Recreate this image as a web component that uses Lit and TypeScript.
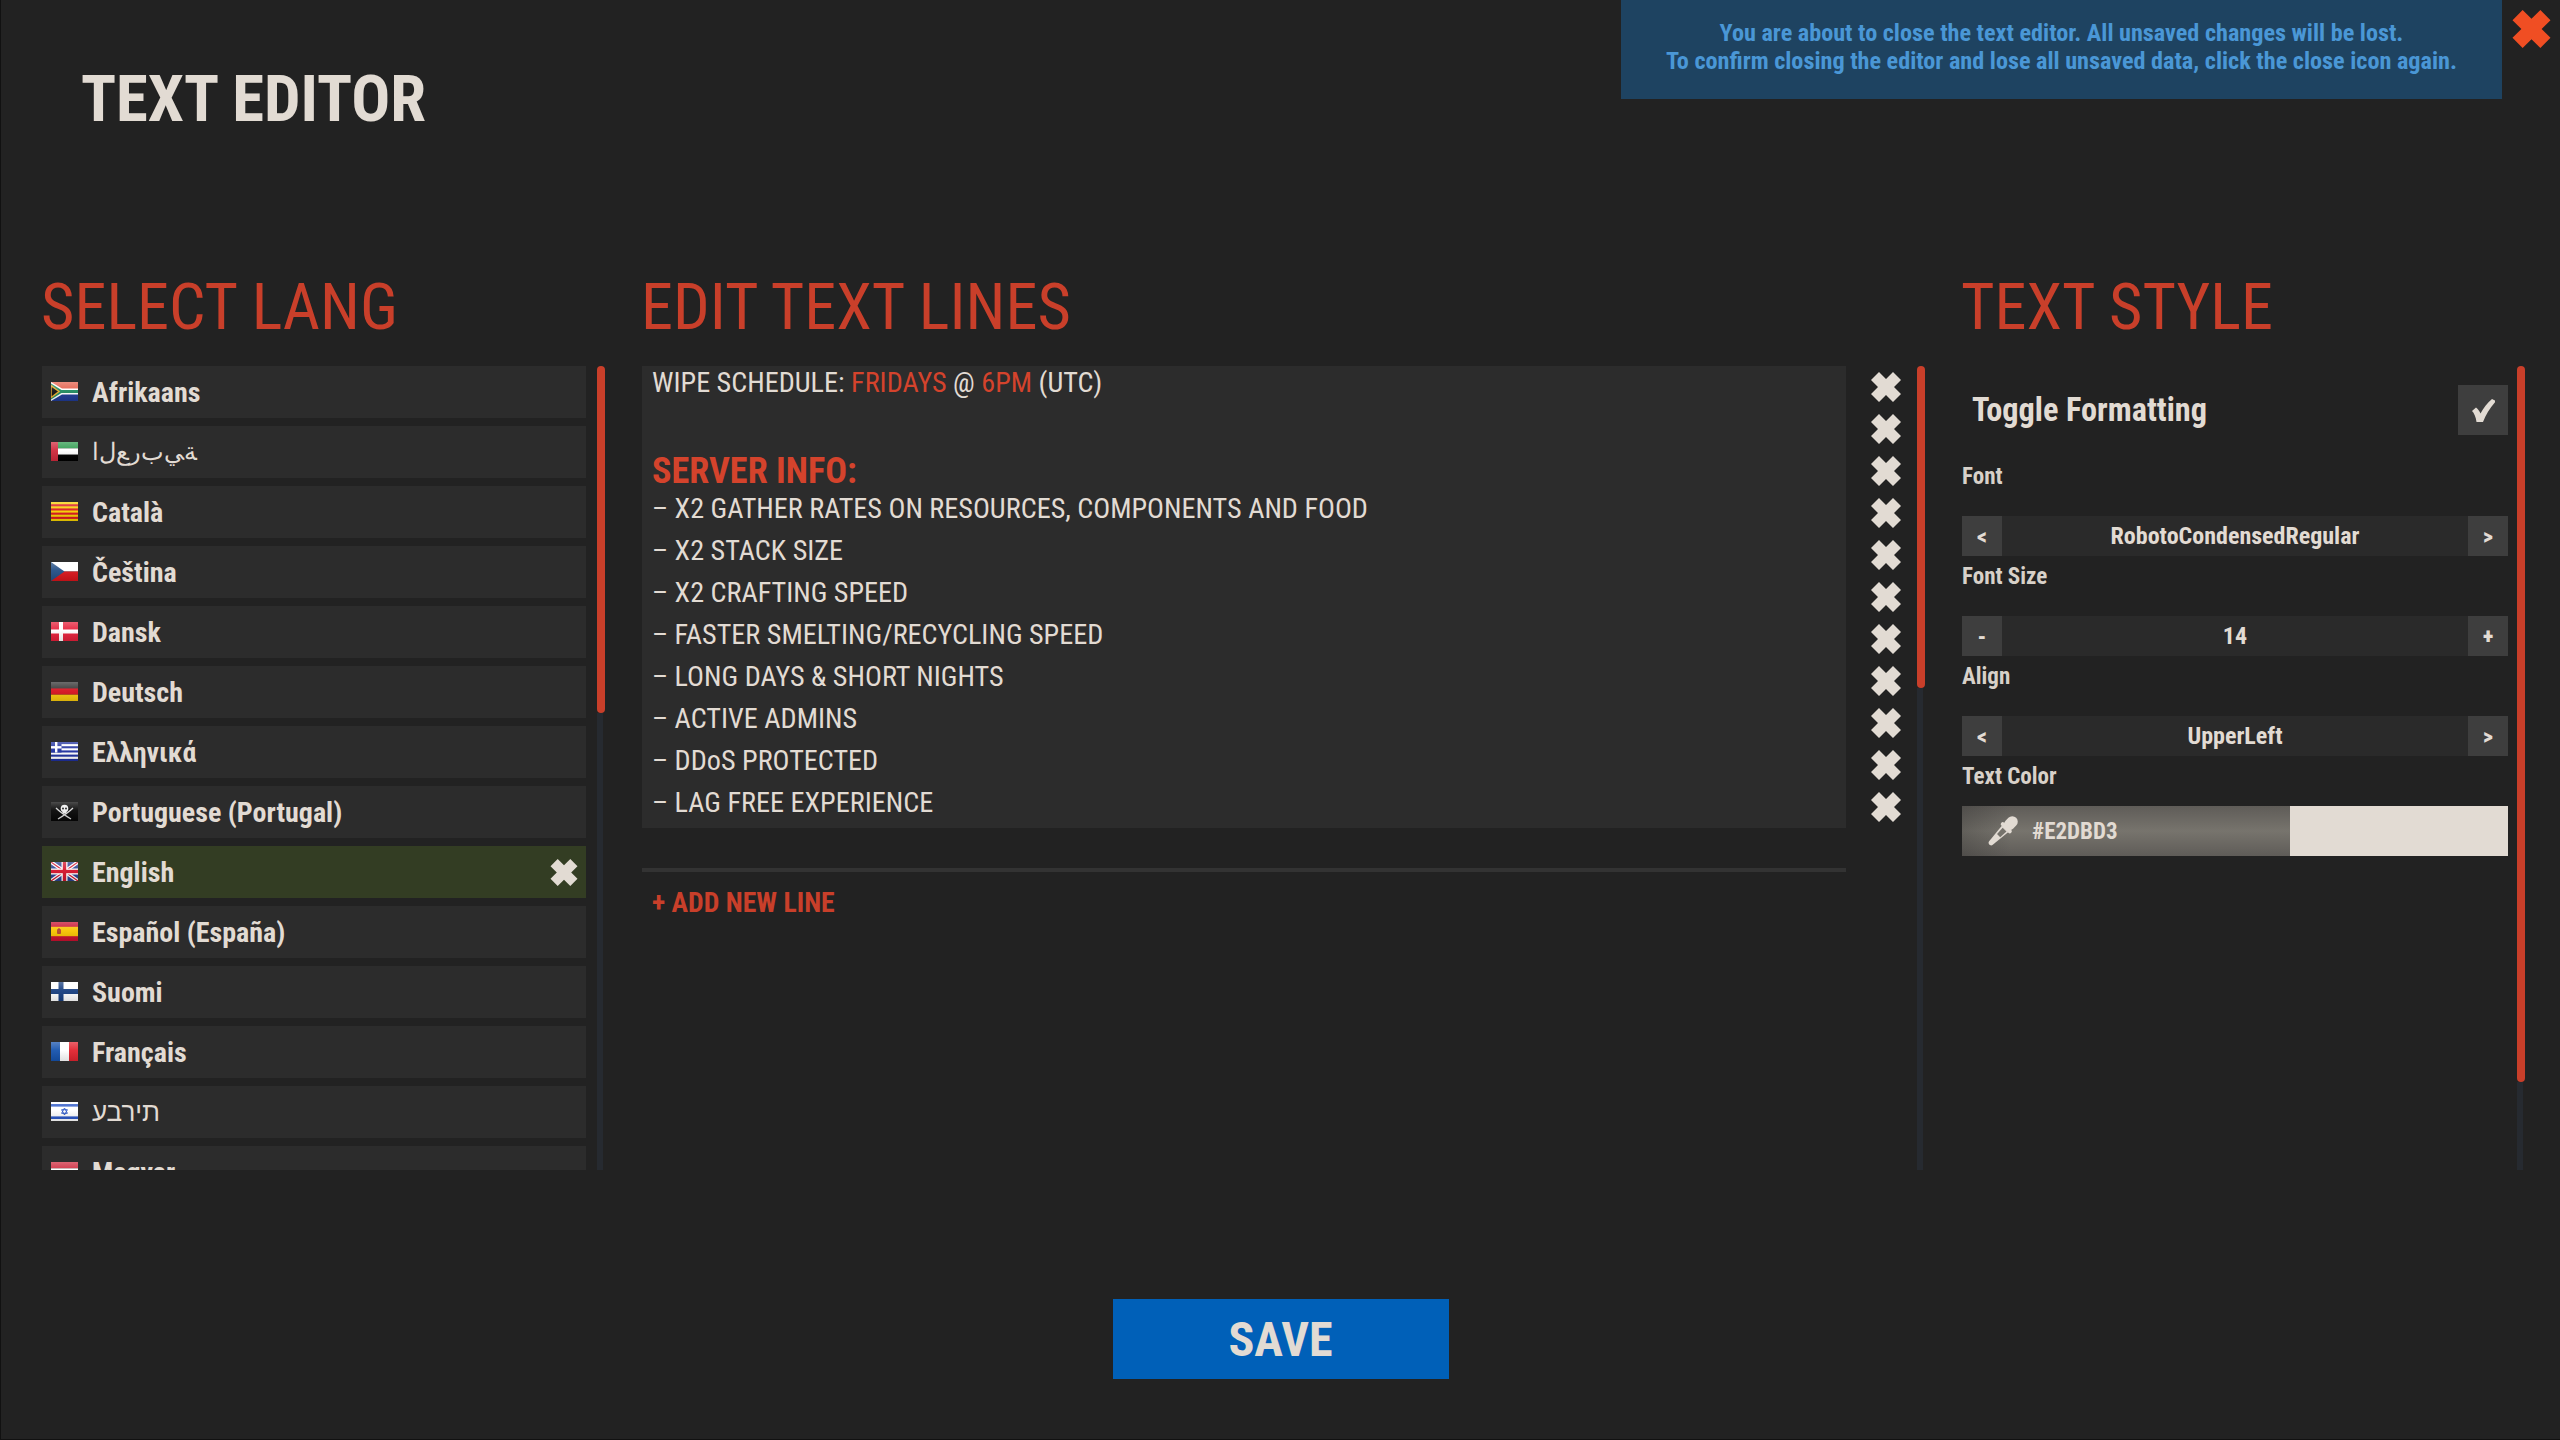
import { LitElement, html, css, svg } from "lit";
import { customElement } from "lit/decorators.js";

const X = "8,0 15,7 22,0 30,8 23,15 30,22 22,30 15,23 8,30 0,22 7,15 0,8";
const xIcon = (cls: string) => html`<svg class=${cls} viewBox="0 0 30 30"><polygon points=${X} /></svg>`;

const flags: Record<string, unknown> = {
  za: svg`<rect width="27" height="19" fill="#e4604c"/><rect y="9.5" width="27" height="9.5" fill="#1f3a93"/><path d="M0 0L11 6.5H27V12.5H11L0 19Z" fill="#fff"/><path d="M0 1.5L10.5 8H27V11H10.5L0 17.5Z" fill="#1f8a5f"/><path d="M0 3.5L8 9.5L0 15.5Z" fill="#111" stroke="#e8a92c" stroke-width="1.4"/>`,
  ae: svg`<rect width="27" height="6.4" fill="#2e9b4e"/><rect y="6.4" width="27" height="6.3" fill="#fff"/><rect y="12.7" width="27" height="6.3" fill="#000"/><rect width="7" height="19" fill="#cf2a3c"/>`,
  ca: svg`<rect width="27" height="19" fill="#f5d000"/><g fill="#d8141e"><rect y="2.2" width="27" height="2.1"/><rect y="6.4" width="27" height="2.1"/><rect y="10.6" width="27" height="2.1"/><rect y="14.8" width="27" height="2.1"/></g>`,
  cz: svg`<rect width="27" height="9.5" fill="#fff"/><rect y="9.5" width="27" height="9.5" fill="#d7141a"/><path d="M0 0L13.5 9.5L0 19Z" fill="#234f86"/>`,
  dk: svg`<rect width="27" height="19" fill="#e4203a"/><rect x="8" width="4" height="19" fill="#fff"/><rect y="7.5" width="27" height="4" fill="#fff"/>`,
  de: svg`<rect width="27" height="6.4" fill="#333"/><rect y="6.4" width="27" height="6.3" fill="#d6121f"/><rect y="12.7" width="27" height="6.3" fill="#f6c80b"/>`,
  gr: svg`<rect width="27" height="19" fill="#fff"/><g fill="#1e2f9e"><rect width="27" height="2.1"/><rect y="4.2" width="27" height="2.1"/><rect y="8.4" width="27" height="2.1"/><rect y="12.6" width="27" height="2.1"/><rect y="16.9" width="27" height="2.1"/><rect width="10.5" height="10.5"/></g><rect x="4" width="2.4" height="10.5" fill="#fff"/><rect y="4.1" width="10.5" height="2.4" fill="#fff"/>`,
  pt: svg`<rect width="27" height="19" fill="#060606"/><path d="M5 6C9 10 15 14 20 17M22 6C18 10 12 14 7 17" fill="none" stroke="#d8d8d8" stroke-width="1.3"/><circle cx="13.5" cy="6.5" r="3.8" fill="#eee"/><rect x="11.5" y="9" width="4" height="2.6" fill="#eee"/><circle cx="12" cy="6.5" r=".9" fill="#000"/><circle cx="15" cy="6.5" r=".9" fill="#000"/>`,
  gb: svg`<rect width="27" height="19" fill="#29408f"/><path d="M0 0L27 19M27 0L0 19" stroke="#fff" stroke-width="3.6"/><path d="M0 0L27 19M27 0L0 19" stroke="#d3122a" stroke-width="1.2"/><rect x="10.5" width="6" height="19" fill="#fff"/><rect y="6.5" width="27" height="6" fill="#fff"/><rect x="11.8" width="3.4" height="19" fill="#d3122a"/><rect y="7.8" width="27" height="3.4" fill="#d3122a"/>`,
  es: svg`<rect width="27" height="19" fill="#c8102e"/><rect y="4.8" width="27" height="9.4" fill="#f8c400"/><rect x="6" y="7" width="4" height="5" rx="1" fill="#b5482a"/><rect x="7" y="6.4" width="2" height="1.4" fill="#a33"/>`,
  fi: svg`<rect width="27" height="19" fill="#fff"/><rect x="7.5" width="5" height="19" fill="#183f80"/><rect y="7" width="27" height="5" fill="#183f80"/>`,
  fr: svg`<rect width="9" height="19" fill="#1653ad"/><rect x="9" width="9" height="19" fill="#fff"/><rect x="18" width="9" height="19" fill="#e1242f"/>`,
  il: svg`<rect width="27" height="19" fill="#fff"/><rect y="2" width="27" height="2.6" fill="#2a56c6"/><rect y="14.4" width="27" height="2.6" fill="#2a56c6"/><path d="M13.5 6L16.4 11.3H10.6ZM13.5 13L10.6 7.7H16.4Z" fill="none" stroke="#2a56c6" stroke-width="1"/>`,
  hu: svg`<rect width="27" height="6.4" fill="#cd2a3e"/><rect y="6.4" width="27" height="6.3" fill="#fff"/><rect y="12.7" width="27" height="6.3" fill="#43805a"/>`,
};

const langs = [
  { c: "za", n: "Afrikaans" },
  { c: "ae", n: "\uFE94\uFEF2\uFE8F\uFEAD\uFECA\uFEDD\uFE8D", raw: "ar" },
  { c: "ca", n: "Català" },
  { c: "cz", n: "Čeština" },
  { c: "dk", n: "Dansk" },
  { c: "de", n: "Deutsch" },
  { c: "gr", n: "Ελληνικά" },
  { c: "pt", n: "Portuguese (Portugal)" },
  { c: "gb", n: "English", active: true },
  { c: "es", n: "Español (España)" },
  { c: "fi", n: "Suomi" },
  { c: "fr", n: "Français" },
  { c: "il", n: "עברית", raw: "he" },
  { c: "hu", n: "Magyar" },
];

const lines = [
  "– X2 GATHER RATES ON RESOURCES, COMPONENTS AND FOOD",
  "– X2 STACK SIZE",
  "– X2 CRAFTING SPEED",
  "– FASTER SMELTING/RECYCLING SPEED",
  "– LONG DAYS & SHORT NIGHTS",
  "– ACTIVE ADMINS",
  "– DDoS PROTECTED",
  "– LAG FREE EXPERIENCE",
];

@customElement("app-root")
export class AppRoot extends LitElement {
  static styles = css`
    :host {
      display: block;
      width: 2560px;
      height: 1440px;
      background: #222222;
      color: #e2dbd3;
      font-family: "Roboto Condensed", "Liberation Sans Narrow", Roboto, sans-serif;
      font-stretch: 75%;
      overflow: hidden;
    }
    .page { height: 1440px; display: flex; flex-direction: column; box-sizing: border-box; border-left: 1px solid #111; border-bottom: 1px solid #111; }
    .header { height: 252px; display: flex; align-items: flex-start; flex: none; }
    .title { margin: 61px 0 0 80px; font-size: 64.7px; line-height: 76px; font-weight: 700; }
    .notice {
      margin-left: auto; width: 881px; height: 99px; box-sizing: border-box; padding-top: 19px;
      background: #1e4361; color: #4a97d6; font-size: 24.2px; line-height: 28px; font-weight: 700; text-align: center;
    }
    .close { width: 39px; height: 38px; margin: 10px 9px 0 10px; fill: #f04e23; display: block; flex: none; }
    .columns { display: flex; padding-left: 41px; height: 918px; flex: none; }
    .col { display: flex; flex-direction: column; }
    .col.a { width: 563px; margin-right: 37px; }
    .col.b { width: 1283px; margin-right: 37px; }
    .col.c { width: 563px; }
    h2 { margin: 0 0 0 -1px; height: 114px; box-sizing: border-box; padding-top: 17px; font-size: 64.4px; line-height: 76px; font-weight: 400; color: #c93f2a; }
    .body { height: 804px; display: flex; }
    .scroll { width: 8px; display: flex; flex-direction: column; flex: none; }
    .thumb { background: #c93f2a; border-radius: 4px; flex: none; }
    .rest { flex: 1; width: 6px; background: #262a30; }

    .list { width: 544px; margin-right: 11px; overflow: hidden; display: flex; flex-direction: column; gap: 8px; flex: none; }
    .row { height: 52px; flex: none; background: #2c2c2c; display: flex; align-items: center; padding-left: 9px; font-size: 28px; font-weight: 700; }
    .row.active { background: #333d23; }
    .flag { width: 27px; height: 19px; position: relative; flex: none; margin-right: 14px; margin-top: -1px; }
    .flag svg { display: block; width: 27px; height: 19px; }
    .flag::after { content: ""; position: absolute; inset: 0; background: linear-gradient(rgba(255,255,255,.28), rgba(255,255,255,.05) 45%, rgba(0,0,0,.12)); }
    .name { flex: 1; }
    .name.ar { font-family: "DejaVu Sans", sans-serif; font-weight: 200; font-stretch: 100%; font-size: 24px; letter-spacing: -1.5px; text-align: left; }
    .name.he { font-family: "Liberation Sans", sans-serif; font-weight: 400; font-stretch: 100%; font-size: 26px; unicode-bidi: bidi-override; direction: ltr; text-align: left; }
    .row-x { width: 28px; height: 27px; fill: #e2dbd3; margin-right: 8px; flex: none; }

    .editor-wrap { width: 1204px; margin-right: 25px; flex: none; }
    .editor { height: 462px; background: #2c2c2c; padding-left: 10px; box-sizing: border-box; overflow: hidden; font-size: 28.2px; line-height: 42px; }
    .editor .line { height: 42px; white-space: pre; }
    .editor .line:first-child { margin-top: -4px; }
    .red { color: #d4432c; }
    .editor .info { color: #d4432c; font-size: 36.2px; line-height: 35px; height: 35px; padding-top: 7px; font-weight: 700; }
    .sep { height: 4px; background: #333333; margin-top: 40px; }
    .add { margin: 11px 0 0 10px; color: #c93f2a; font-size: 27.7px; line-height: 40px; font-weight: 700; }
    .xs { width: 30px; margin-right: 16px; flex: none; display: flex; flex-direction: column; gap: 12px; padding-top: 6px; }
    .xs svg { width: 30px; height: 30px; fill: #e2dbd3; display: block; }

    .style { width: 546px; margin-right: 9px; flex: none; }
    .toggle { height: 50px; margin-top: 19px; display: flex; align-items: center; justify-content: space-between; padding-left: 10px; font-size: 32.3px; font-weight: 700; }
    .check { width: 50px; height: 50px; background: #3e3e3e; display: flex; align-items: center; justify-content: center; }
    .check svg { width: 24px; height: 23px; fill: #e2dbd3; }
    .label { height: 60px; box-sizing: border-box; padding-top: 5px; font-size: 23px; line-height: 32px; font-weight: 700; color: #d8d1c9; }
    .label.short { height: 50px; }
    .labels { margin-top: 21px; }
    .stepper { height: 40px; display: flex; background: #2a2a2a; font-size: 24px; font-weight: 700; }
    .stepper .btn { width: 40px; background: #3e3e3e; display: flex; align-items: center; justify-content: center; font-size: 22px; font-weight: 900; flex: none; }
    .stepper .val { flex: 1; text-align: center; line-height: 40px; }
    .color { height: 50px; display: flex; }
    .swatch-l {
      width: 328px; display: flex; align-items: center; padding-left: 25px; box-sizing: border-box; font-size: 23px; font-weight: 700;
      background: linear-gradient(90deg, rgba(34,34,34,.25), rgba(34,34,34,0) 15%), linear-gradient(#5f5c58, #77746d 50%, #5f5c58);
    }
    .swatch-l svg { width: 33px; height: 32px; margin-right: 12px; overflow: visible; flex: none; }
    .swatch-r { flex: 1; background: #e2dbd3; }

    .foot { display: flex; justify-content: center; height: 80px; margin-top: 129px; flex: none; }
    .btn-save { width: 336px; height: 80px; background: #0060b8; font-size: 48px; font-weight: 700; display: flex; align-items: center; justify-content: center; }
  `;

  private scrollbar(h: number) {
    return html`<div class="scroll"><div class="thumb" style="height:${h}px"></div><div class="rest"></div></div>`;
  }

  private stepper(l: string, v: string, r: string) {
    return html`<div class="stepper"><div class="btn">${l}</div><div class="val">${v}</div><div class="btn">${r}</div></div>`;
  }

  render() {
    return html`<div class="page">
      <div class="header">
        <div class="title">TEXT EDITOR</div>
        <div class="notice">You are about to close the text editor. All unsaved changes will be lost.<br />To confirm closing the editor and lose all unsaved data, click the close icon again.</div>
        ${xIcon("close")}
      </div>
      <div class="columns">
        <div class="col a">
          <h2>SELECT LANG</h2>
          <div class="body">
            <div class="list">
              ${langs.map(
                (l) => html`<div class="row ${l.active ? "active" : ""}">
                  <div class="flag"><svg viewBox="0 0 27 19">${flags[l.c]}</svg></div>
                  <div class="name ${l.raw || ""}">${l.n}</div>
                  ${l.active ? xIcon("row-x") : ""}
                </div>`
              )}
            </div>
            ${this.scrollbar(347)}
          </div>
        </div>
        <div class="col b">
          <h2>EDIT TEXT LINES</h2>
          <div class="body">
            <div class="editor-wrap">
              <div class="editor">
                <div class="line">WIPE SCHEDULE: <span class="red">FRIDAYS</span> @ <span class="red">6PM</span> (UTC)</div>
                <div class="line"></div>
                <div class="line info">SERVER INFO:</div>
                ${lines.map((t) => html`<div class="line">${t}</div>`)}
              </div>
              <div class="sep"></div>
              <div class="add">+ ADD NEW LINE</div>
            </div>
            <div class="xs">${Array.from({ length: 11 }, () => xIcon(""))}</div>
            ${this.scrollbar(322)}
          </div>
        </div>
        <div class="col c">
          <h2>TEXT STYLE</h2>
          <div class="body">
            <div class="style">
              <div class="toggle">
                <span>Toggle Formatting</span>
                <div class="check"><svg viewBox="0 0 24 23"><path d="M21 0 L25 2 C19 9 15 15 12 23 L5.5 23 C5 18 3 14 1 12 L5 8.5 C7 10 8.5 12 9.5 14.5 C12.5 9 16 4 21 0Z" /></svg></div>
              </div>
              <div class="labels">
                <div class="label">Font</div>
                ${this.stepper("<", "RobotoCondensedRegular", ">")}
                <div class="label">Font Size</div>
                ${this.stepper("-", "14", "+")}
                <div class="label">Align</div>
                ${this.stepper("<", "UpperLeft", ">")}
                <div class="label short">Text Color</div>
                <div class="color">
                  <div class="swatch-l">
                    <svg viewBox="0 0 33 32" fill="#e2dbd3">
                      <g transform="translate(3 29) rotate(45)">
                        <rect x="-5.5" y="-37" width="11" height="15" rx="5.5" />
                        <rect x="-7" y="-25" width="14" height="4" rx="2" />
                        <path d="M-4.5 -21.5H4.5L2.5 -1C2 1.5 -2 1.5 -2.5 -1Z" />
                        <path d="M-2.6 -20.5H2.8L2.4 -12H-2Z" fill="#76736c" />
                      </g>
                    </svg>
                    <span>#E2DBD3</span>
                  </div>
                  <div class="swatch-r"></div>
                </div>
              </div>
            </div>
            ${this.scrollbar(716)}
          </div>
        </div>
      </div>
      <div class="foot"><div class="btn-save">SAVE</div></div>
    </div>`;
  }
}
